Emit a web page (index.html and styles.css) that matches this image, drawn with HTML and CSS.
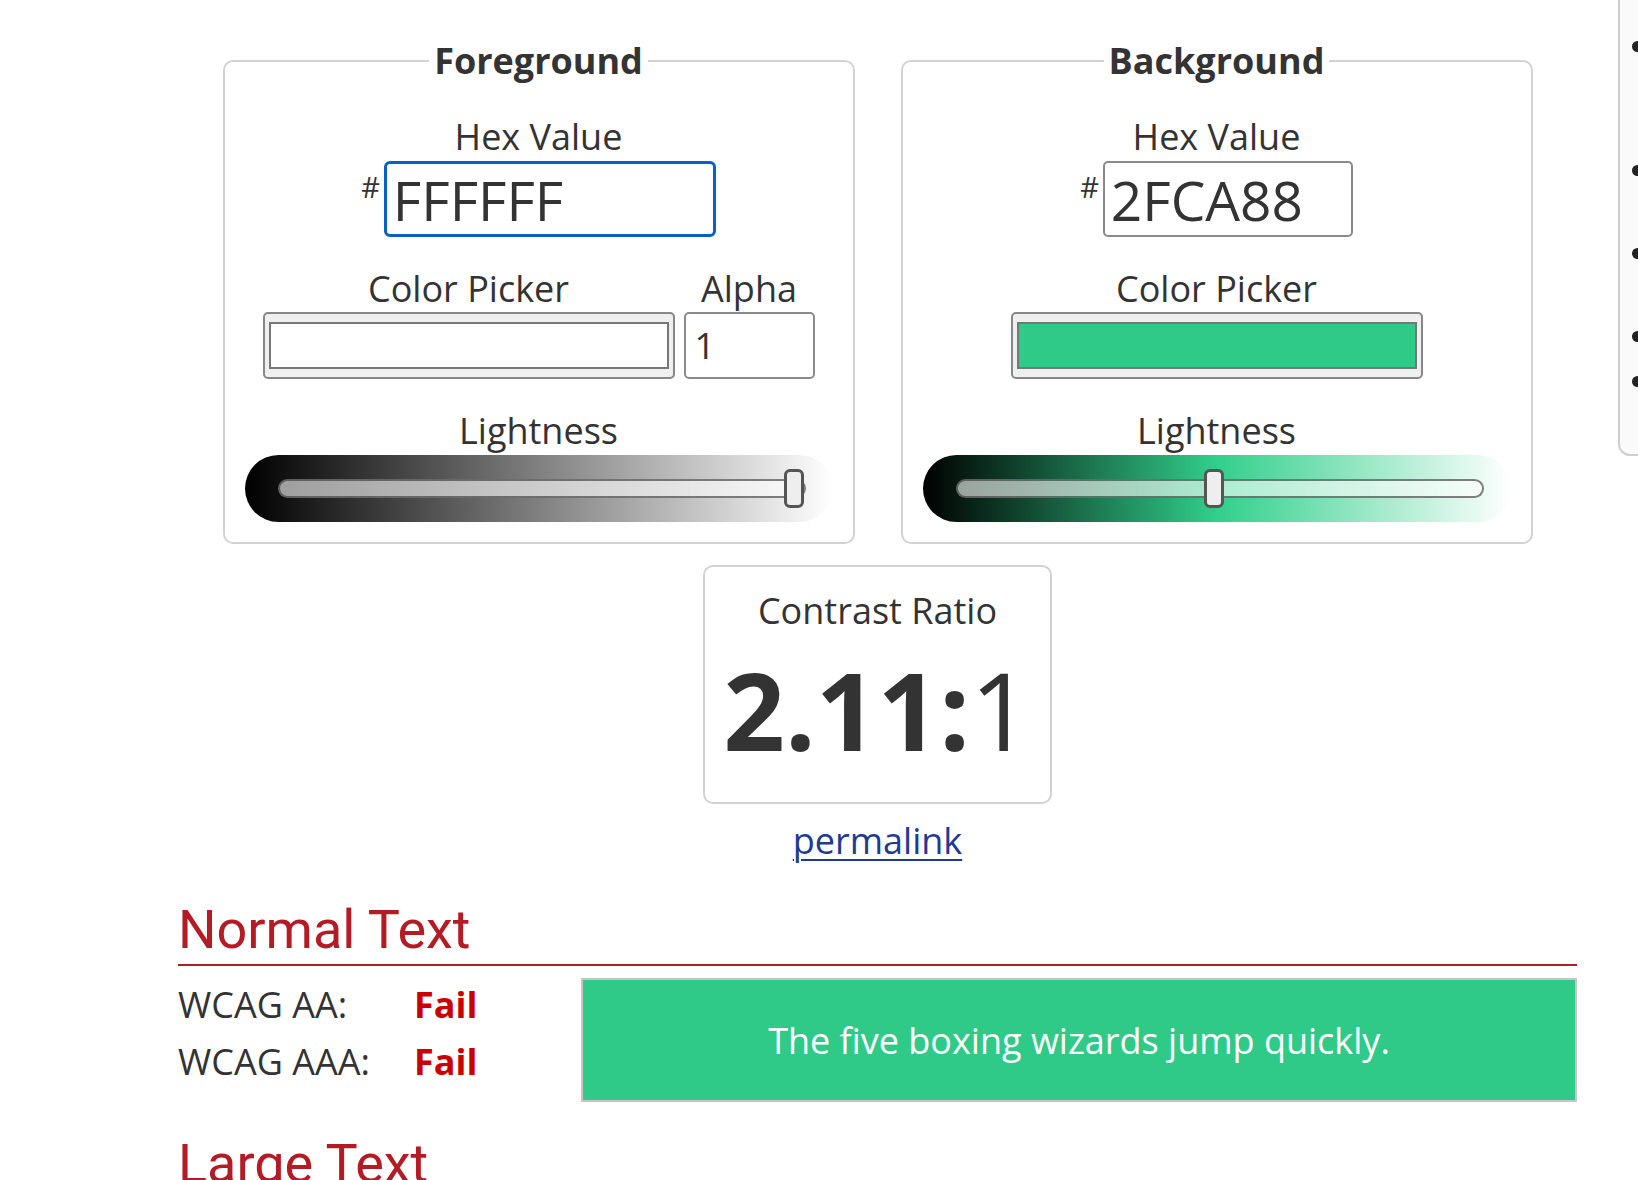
FILE: index.html
```html
<!DOCTYPE html>
<html lang="en">
<head>
<meta charset="utf-8">
<title>Contrast Checker</title>
<link rel="stylesheet" href="styles.css">
</head>
<body>
<div class="page">
  <main class="main">
    <div class="pickers">
      <fieldset class="picker">
        <legend>Foreground</legend>
        <label class="label label-first" for="fg-hex">Hex Value</label>
        <div class="hex-group">
          <span class="hash">#</span>
          <input id="fg-hex" class="hex-input hex-wide is-focused" type="text" value="FFFFFF">
        </div>
        <div class="picker-row">
          <div class="field">
            <span class="label">Color Picker</span>
            <div class="swatch"><span class="swatch-fill swatch-white"></span></div>
          </div>
          <div class="field">
            <span class="label">Alpha</span>
            <input class="alpha-input" type="text" value="1">
          </div>
        </div>
        <span class="label label-spaced">Lightness</span>
        <div class="slider slider-gray">
          <div class="track"><span class="thumb" style="--v:1"></span></div>
        </div>
      </fieldset>

      <fieldset class="picker">
        <legend>Background</legend>
        <label class="label label-first" for="bg-hex">Hex Value</label>
        <div class="hex-group">
          <span class="hash">#</span>
          <input id="bg-hex" class="hex-input hex-narrow" type="text" value="2FCA88">
        </div>
        <div class="picker-row">
          <div class="field">
            <span class="label">Color Picker</span>
            <div class="swatch"><span class="swatch-fill swatch-green"></span></div>
          </div>
        </div>
        <span class="label label-spaced">Lightness</span>
        <div class="slider slider-green">
          <div class="track"><span class="thumb" style="--v:0.489"></span></div>
        </div>
      </fieldset>
    </div>

    <div class="ratio-box">
      <div class="ratio-label">Contrast Ratio</div>
      <div class="ratio-value"><b>2.11:</b>1</div>
    </div>
    <a class="permalink" href="#">permalink</a>

    <h2 class="section-title">Normal Text</h2>
    <div class="result-row">
      <div class="results">
        <div class="result"><span class="result-name">WCAG AA:</span><span class="fail">Fail</span></div>
        <div class="result"><span class="result-name">WCAG AAA:</span><span class="fail">Fail</span></div>
      </div>
      <div class="sample">The five boxing wizards jump quickly.</div>
    </div>

    <h2 class="section-title section-next">Large Text</h2>
  </main>

  <aside class="sidebar">
    <ul class="nav">
      <li><span class="nav-text">Contrast and Color<br>Accessibility<br>Overview</span></li>
      <li><span class="nav-text">Link Contrast<br>Checker</span></li>
      <li><span class="nav-text">WCAG 2 Contrast<br>Requirements</span></li>
      <li class="nav-gap"><span class="nav-text">Color Palettes</span></li>
      <li><span class="nav-text">Resources</span></li>
    </ul>
  </aside>
</div>
</body>
</html>
```

FILE: styles.css
```css
html, body {
  margin: 0;
  padding: 0;
  overflow: hidden;
  background: #ffffff;
}

body {
  font-family: "Open Sans", "Noto Sans", sans-serif;
  font-size: 36px;
  color: #333333;
}

.page {
  display: flex;
  align-items: flex-start;
}

.main {
  flex: none;
  width: 1399px;
  margin-left: 178px;
  padding-top: 37px;
}

/* ---------- picker fieldsets ---------- */
.pickers {
  display: flex;
  justify-content: center;
  gap: 46px;
}

.picker {
  box-sizing: border-box;
  width: 632px;
  min-width: 0;
  margin: 0;
  padding: 0 20px 20px;
  border: 2px solid #d2d2d2;
  border-radius: 10px;
  display: flex;
  flex-direction: column;
  align-items: center;
}

.picker legend {
  margin: 0 auto;
  padding: 0 5px;
  font-weight: 700;
  font-size: 36px;
  line-height: 48px;
  color: #333333;
}

.label {
  display: block;
  text-align: center;
  font-size: 36px;
  line-height: 46px;
  color: #333333;
}

.label-first {
  margin-top: 29px;
}

.label-spaced {
  margin-top: 29px;
}

.hex-group {
  display: flex;
  align-items: flex-start;
  gap: 4px;
  margin-top: 1px;
}

.hash {
  font-size: 29px;
  line-height: 28px;
  margin-top: 12px;
  color: #333333;
}

.hex-input {
  box-sizing: border-box;
  height: 76px;
  margin: 0;
  padding: 0 6px;
  font-family: "Open Sans", "Noto Sans", sans-serif;
  font-size: 55px;
  color: #333333;
  background: #ffffff;
  border: 2px solid #8a8a8a;
  border-radius: 5px;
  outline: none;
}

.hex-wide {
  width: 332px;
}

.hex-narrow {
  width: 250px;
}

.is-focused {
  border: 3px solid #0b5fc6;
  border-radius: 6px;
  padding-left: 6px;
}

.picker-row {
  display: flex;
  gap: 9px;
  margin-top: 29px;
}

.field {
  display: flex;
  flex-direction: column;
  align-items: center;
}

.swatch {
  box-sizing: border-box;
  width: 412px;
  height: 67px;
  padding: 8px 4px;
  background: #efefef;
  border: 2px solid #878787;
  border-radius: 5px;
  display: flex;
}

.swatch-fill {
  flex: 1;
  border: 2px solid #777777;
}

.swatch-white {
  background: #ffffff;
}

.swatch-green {
  background: #2fca88;
}

.alpha-input {
  box-sizing: border-box;
  width: 131px;
  height: 67px;
  margin: 0;
  padding: 0 9px;
  font-family: "Open Sans", "Noto Sans", sans-serif;
  font-size: 36px;
  color: #333333;
  background: #ffffff;
  border: 2px solid #8a8a8a;
  border-radius: 5px;
  outline: none;
}

/* ---------- lightness sliders ---------- */
.slider {
  box-sizing: border-box;
  width: 100%;
  height: 67px;
  margin-top: 1px;
  padding: 0 27px 0 33px;
  border-radius: 34px;
  display: flex;
  align-items: center;
}

.slider-gray {
  background: linear-gradient(to right, #000000, #808080 50%, #ffffff);
}

.slider-green {
  background: linear-gradient(to right, #000000, #31cf8b 50%, #ffffff);
}

.track {
  position: relative;
  flex: 1;
  box-sizing: border-box;
  height: 19px;
  border: 2px solid rgba(60, 60, 60, 0.65);
  border-radius: 10px;
  background: rgba(255, 255, 255, 0.6);
}

.thumb {
  position: absolute;
  top: -12px;
  left: calc((100% - 20px) * var(--v));
  box-sizing: border-box;
  width: 20px;
  height: 39px;
  background: #eeeeee;
  border: 3px solid #555555;
  border-radius: 6px;
}

/* ---------- contrast ratio ---------- */
.ratio-box {
  box-sizing: border-box;
  width: 349px;
  margin: 21px auto 0;
  padding: 21px 0 27px;
  border: 2px solid #d2d2d2;
  border-radius: 10px;
  text-align: center;
}

.ratio-label {
  font-size: 36px;
  line-height: 46px;
}

.ratio-value {
  margin-top: 11px;
  font-size: 108px;
  line-height: 130px;
  font-weight: 400;
  color: #333333;
}

.ratio-value b {
  font-weight: 700;
}

.permalink {
  display: block;
  width: max-content;
  margin: 14px auto 0;
  font-size: 36px;
  line-height: 46px;
  color: #1f3a93;
  text-decoration: underline;
  text-decoration-thickness: 2px;
  text-underline-offset: 5px;
}

/* ---------- results ---------- */
.section-title {
  margin: 34px 0 0;
  padding-bottom: 3px;
  font-family: Roboto, "Liberation Sans", sans-serif;
  font-weight: 400;
  font-size: 54px;
  line-height: 63px;
  color: #b31b25;
  border-bottom: 2px solid #b31b25;
}

.section-next {
  margin-top: 30px;
  border-bottom: none;
}

.result-row {
  display: flex;
  align-items: flex-start;
  margin-top: 10px;
}

.results {
  flex: none;
  width: 403px;
}

.result {
  display: flex;
  font-size: 36px;
  line-height: 57px;
}

.result-name {
  width: 236px;
}

.fail {
  font-weight: 700;
  color: #cc0000;
}

.sample {
  flex: 1;
  box-sizing: border-box;
  height: 124px;
  margin-top: 2px;
  border: 2px solid #c6c6c6;
  background: #2fca88;
  color: #ffffff;
  font-size: 36px;
  display: flex;
  align-items: center;
  justify-content: center;
}

/* ---------- sidebar ---------- */
.sidebar {
  flex: none;
  box-sizing: border-box;
  width: 420px;
  margin-left: 41px;
  padding: 26px 0 50px 12px;
  background: #fafafa;
  border-left: 2px solid #cfcfcf;
  border-bottom: 2px solid #cfcfcf;
  border-bottom-left-radius: 12px;
}

.nav {
  margin: 0;
  padding: 0;
  list-style: none;
}

.nav li {
  display: flex;
  align-items: flex-start;
  gap: 40px;
  margin-bottom: 2px;
  font-size: 24px;
  line-height: 40.5px;
  white-space: nowrap;
  color: #333333;
}

.nav li.nav-gap {
  margin-bottom: 5px;
}

.nav li::before {
  content: "";
  flex: none;
  width: 11px;
  height: 11px;
  margin-top: 15px;
  border-radius: 50%;
  background: #222222;
}

.nav-text {
  display: block;
}
```
